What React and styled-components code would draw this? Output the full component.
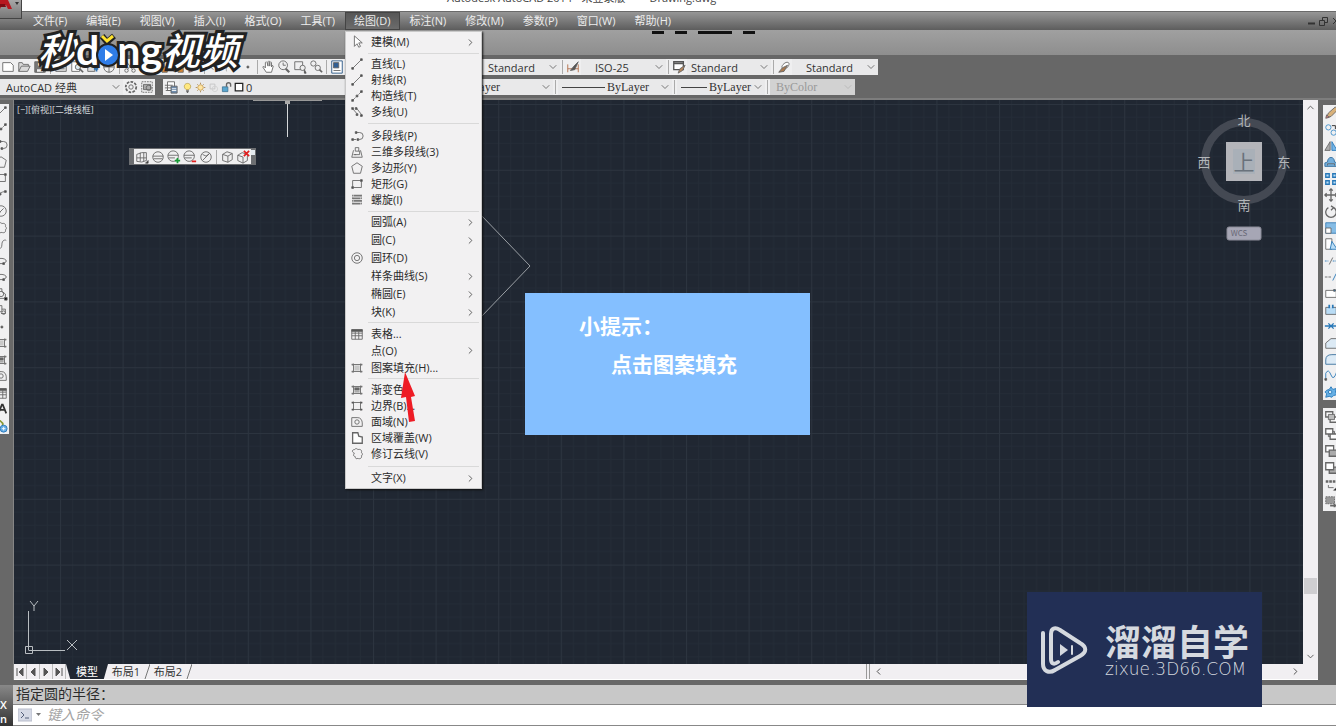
import { Fragment } from "react";
import styled, { createGlobalStyle } from "styled-components";
import { ChevronDown, ChevronLeft, ChevronRight, ChevronUp } from "lucide-react";

const GlobalStyle = createGlobalStyle`
  * { box-sizing: border-box; }
  body {
    margin: 0;
    background: #686868;
    font-family: "Open Sans", "Noto Sans CJK SC", sans-serif;
    font-size: 11px;
    color: #2b2b2b;
  }
  button, input, select { font: inherit; color: inherit; }
`;

/* Small 16x16 drawings used by toolbars and menu rows */
const shapes = {
  arrow: <path d="M5 1v12l3-3 2 4 2-1-2-4h4z" fill="#fff" />,
  line: <><path d="M3 13 13 3" /><path d="M2 12h2v2H2zM12 2h2v2h-2z" fill="#444" /></>,
  xline: <><path d="M2 14 14 2" strokeDasharray="5 1" /><path d="M2 12h2v2H2zM7 7h2v2H7zM12 2h2v2h-2z" fill="#444" /></>,
  mline: <><path d="m2 3 6 7M7 3l7 9" /><path d="M2 3h2v2H2zM6 3h2v2H6zM7 10h2v2H7zM12 11h2v2h-2z" fill="#444" /></>,
  pline: <><path d="M3 12h4M7 4h4a4 4 0 0 1 0 8h-1" /><path d="M2 11h2v2H2zM8 11h2v2H8zM6 3h2v2H6z" fill="#444" /></>,
  poly3d: <><path d="m4 6-2 8h12l-2-8" /><path d="M5 11h6V7H6V3h4v4M4 11h3" /></>,
  polygon: <path d="M8 2 14 6 12 14H4L2 6z" />,
  rect: <><path d="M3 4h10v8H3z" /><path d="M12 3h2v2h-2zM2 11h2v2H2z" fill="#444" /></>,
  helix: <><path d="M4 3h9M3 6h9M4 9h9M3 12h9" stroke="#777" strokeWidth="2" /><path d="M3 2v12M13 2v12" strokeDasharray="2 1" /></>,
  donut: <><circle cx="8" cy="8" r="6" /><circle cx="8" cy="8" r="3" /></>,
  table: <><path d="M2 3h12v11H2zM2 7h12M2 10h12M6 5v9M10 5v9" /><path d="M2 3h12v2H2z" fill="#555" /></>,
  hatch: <><path d="M4 3v10M12 3v10M2 4h12M2 12h12" /><path d="M5 5h6v6H5z" fill="#c8c8c8" stroke="none" /><path d="M2 3h2v2H2zM12 3h2v2h-2zM2 11h2v2H2zM12 11h2v2h-2z" fill="#777" stroke="none" /></>,
  gradient: <><path d="M4 3v10M12 3v10M2 4h12M2 12h12" /><path d="M5 5h6v3H5z" fill="#666" stroke="none" /><path d="M5 8h6v3H5z" fill="#aaa" stroke="none" /><path d="M2 3h2v2H2zM12 3h2v2h-2zM2 11h2v2H2zM12 11h2v2h-2z" fill="#777" stroke="none" /></>,
  boundary: <><path d="M4 3v10M12 3v10M2 4h12M2 12h12" /><path d="M2 3h2v2H2zM12 3h2v2h-2zM2 11h2v2H2zM12 11h2v2h-2z" fill="#555" stroke="none" /></>,
  region: <><path d="M2 3h7c3 0 5 3 5 6v4H2z" /><circle cx="8" cy="8" r="2.5" /></>,
  wipeout: <path d="M3 2h6l1 4 4 1v7H3z" fill="#fff" strokeWidth="1.5" />,
  cloud: <path d="M5 3c2-2 3-1 4 0 3-1 5 1 4 3 2 2 1 4 0 4 1 3-2 4-4 3-2 1-3 0-3-2-3-1-2-2-1-4-3-1-3-4 0-4z" />,
  arc: <><path d="M3 13C4 7 8 4 14 4" /><path d="M2 12h2v2H2zM6 6h2v2H6zM12 3h2v2h-2z" fill="#444" /></>,
  circle: <><circle cx="8" cy="8" r="6" /><path d="m7 9 4-4M6 9h2" /></>,
  spline: <path d="M2 4c0 12 7 11 7 5s4-6 5-5" />,
  ellipse: <><ellipse cx="8" cy="8" rx="6" ry="3" /><path d="M10 10h2v2h-2z" fill="#444" /></>,
  insert: <><path d="M2 2h7v3l4 3v5H3V9h4" /><circle cx="8" cy="8" r="3" /><path d="M12 12h3v3h-3z" fill="#111" /></>,
  block: <><path d="M3 3h6v7H3zM9 7h4v5H8" /><circle cx="11" cy="11" r="2" /></>,
  point: <path d="M8 7h2v2H8z" fill="#444" />,
  text: <path d="m5 13 4-10h1l4 10M7 9h5" stroke="#333" strokeWidth="2" />,
  addsel: <><path d="M4 2h3l3 3v3" stroke="#8a9a35" strokeWidth="2" /><circle cx="11" cy="11" r="4" fill="#68afe5" stroke="#2877b9" /><path d="M11 9v4M9 11h4" stroke="#fff" /></>,
  newFile: <path d="M2 3h9l3 3v7H2z" fill="#fff" />,
  open: <><path d="M2 13V3h4l1 2h6v2M2 13l3-6h10l-3 6z" fill="#d9d9d9" /></>,
  save: <><path d="M2 2h12v12H2z" fill="#777" /><path d="M5 3h6v4H5zM4 10h8v4H4z" fill="#eee" /></>,
  print: <><path d="M4 7V2h8v5M2 7h12v6H2z" fill="#ddd" /><path d="M4 10h8" /></>,
  preview: <><path d="M2 2h9v11H2z" fill="#fff" /><circle cx="9" cy="8" r="3" fill="#dceaf2" /><path d="m11 10 4 4" strokeWidth="2" /></>,
  publish: <><path d="M2 4h8v9H2z" fill="#ddd" /><path d="M9 10h5M12 7v6" stroke="#2e70b0" strokeWidth="2" /></>,
  globe: <><circle cx="8" cy="8" r="6" /><path d="M2 8h12M8 2v12" /></>,
  cut: <><path d="m4 2 7 9M12 2 5 11" /><circle cx="4" cy="12" r="2" /><circle cx="12" cy="12" r="2" /></>,
  paste: <><path d="M3 3h8v10H3z" fill="#eee" /><path d="M8 8h6v6H8z" fill="#d98634" /></>,
  undo: <path d="m6 3-4 4 4 4M2 7h7c4 0 5 3 4 6" />,
  redo: <path d="m10 3 4 4-4 4M14 7H7c-4 0-5 3-4 6" stroke="#999" />,
  hand: <path d="M5 9 3 7 2 8l4 6h6l2-7-1-1-1 2V3l-1-1-1 1v4-5L9 1 8 2v5L7 3 6 2 5 3z" fill="#fff" />,
  zoom: <><circle cx="7" cy="6" r="5" /><path d="M7 3v3h3" /><path d="m10 10 4 4" strokeWidth="2.5" /></>,
  zoomWin: <><path d="M2 2h9v9H2z" /><circle cx="11" cy="9" r="3" fill="#eee" /><path d="M13 11v4h2z" fill="#111" /></>,
  zoomPrev: <><circle cx="5" cy="4" r="3" /><circle cx="10" cy="9" r="3" /><path d="m12 11 3 3" strokeWidth="2" /></>,
  props: <><path d="M2 1h12v14H2z" fill="#fff" stroke="#205080" /><path d="M4 3h6v6H4z" fill="#315f94" /><path d="M4 12h8" /></>,
  dimStyle: <><path d="M2 5v9M14 5v9M2 10h12" stroke="#b06b46" /><path d="m5 12 5-1 4-9-5 5z" fill="#555" /></>,
  tableStyle: <><path d="M2 2h11v9H2zM2 4h11" fill="#fff" stroke="#555" strokeWidth="1.5" /><path d="m7 15 5-3 3-6-6 4z" fill="#b8875b" /></>,
  leaderStyle: <><path d="M6 9c-2-2 4-8 7-6 2 1 0 5-3 7" fill="#fff" /><path d="m2 14 6-1 4-7-6 3z" fill="#a8794f" /></>,
  gear: <><circle cx="8" cy="8" r="6" strokeWidth="2" strokeDasharray="3 1.5" /><circle cx="8" cy="8" r="2.5" /></>,
  workspace: <><path d="M2 2h12v12H2z" strokeDasharray="2 1" /><path d="M4 5h8v6H4z" fill="#aaa" /><circle cx="10" cy="9" r="3" /></>,
  layers: <><path d="M4 2h8v10H4z" fill="#fff" /><path d="M1 6h9M1 9h9M2 12h6" /><path d="M8 7h7v8H8z" fill="#6e8cad" /><path d="M9 10h5M9 12h5" stroke="#fff" /></>,
  bulb: <><path d="M6 11C1 7 4 2 8 2s7 5 2 9z" fill="#ffe880" stroke="#b29638" /><path d="M6 13h4M7 15h2" strokeWidth="2" /></>,
  sun: <><circle cx="8" cy="8" r="4" fill="#ffe5a3" stroke="#b98b37" /><path d="M8 1v2M8 13v2M1 8h2M13 8h2M3 3l1 1M12 12l1 1M3 13l1-1M12 4l1-1" stroke="#9b6d28" /></>,
  freeze: <><path d="M3 3h7v7H3z" stroke="#bbb" /><circle cx="10" cy="10" r="4" stroke="#ccc" /></>,
  lock: <><path d="M2 7h8v7H2z" fill="#59a6cf" stroke="#316889" /><path d="M8 7V4c0-4 6-4 6 0v3" strokeWidth="2" /></>,
  swatch: <path d="M2 2h12v12H2z" fill="#fff" stroke="#222" strokeWidth="2" />,
  pencil: <><path d="m3 13 2-5 8-7 3 3-8 8z" fill="#d8b17a" /><path d="m2 14 4-1-3-3z" fill="#d27878" /></>,
  copy: <><circle cx="5" cy="5" r="3" stroke="#3d8dc9" /><circle cx="11" cy="11" r="3" stroke="#3d8dc9" /><path d="M9 3h4v4" stroke="#222" /></>,
  mirror: <><path d="M7 3v10H1z" fill="#aaa" /><path d="M9 3v10h6z" fill="#77b7e8" stroke="#2878b8" /></>,
  offset: <><path d="M1 13V9l3-1c0-7 8-7 8 0l3 1v4z" fill="#73aedb" stroke="#356f9e" /><path d="M4 12v-2h8v2" /></>,
  array: <path d="M2 2h4v4H2zM10 2h4v4h-4zM2 10h4v4H2zM10 10h4v4h-4z" fill="#b9dcf5" stroke="#2878b8" strokeWidth="1.5" />,
  move: <path d="M8 1v14M1 8h14M6 3l2-2 2 2M6 13l2 2 2-2M3 6 1 8l2 2M13 6l2 2-2 2" strokeWidth="1.5" />,
  rotate: <path d="M11 3a6 6 0 1 1-6 0M8 1l3 2-3 3" strokeWidth="1.5" />,
  scale: <><path d="M2 2h13v12H2z" fill="#85bce5" stroke="#397eb5" /><path d="M2 8h6v6H2z" fill="#fff" /></>,
  stretch: <><path d="M2 2h7v12H2z" fill="#fff" /><path d="m9 5-2 9h8z" fill="#b9dcf5" stroke="#2878b8" /></>,
  trim: <><path d="M1 8h4M10 8h5" stroke="#2878b8" strokeDasharray="2 1" /><path d="m6 12 4-8" /></>,
  extend: <><path d="M1 8h8" strokeDasharray="3 1" /><path d="m10 12 4-8" stroke="#2878b8" /></>,
  breakAt: <><path d="M2 5h12v8H2z" fill="#fff" /><path d="M11 4h2v2h-2z" fill="#2878b8" /></>,
  breaks: <><path d="M6 5H2v8h12V5h-4" fill="#b9dcf5" /><path d="M6 2v4M10 2v4" stroke="#2878b8" strokeWidth="2" /></>,
  join: <path d="M1 8h14M5 5l3 3-3 3M11 5 8 8l3 3" stroke="#2878b8" strokeWidth="1.5" />,
  chamfer: <path d="M2 14V8l6-5h7v11z" fill="#dceaf5" />,
  fillet: <path d="M2 14V9q0-6 7-6h6v11z" fill="#dceaf5" stroke="#376f9b" />,
  blend: <><path d="M2 13V6q3-6 6 2t7-5" stroke="#2878b8" /><path d="M1 12h2v2H1z" fill="#444" /></>,
  explode: <><path d="m3 6 3-1 2-3 2 3 4-1-1 4 2 3-4 1-2 2-3-1-4 1 1-4-2-2z" fill="#65afe4" stroke="#2878b8" /><circle cx="7" cy="8" r="2" fill="#d7ecf9" stroke="#2878b8" /></>,
  order: <><path d="M2 2h8v6H2zM7 8h8v6H7z" fill="#fff" strokeWidth="1.5" /><path d="M5 5h7v6H5z" fill="#bbb" /></>,
  orderBack: <><path d="M5 5h7v6H5z" fill="#bbb" /><path d="M2 2h8v6H2zM7 8h8v6H7z" fill="#fff" strokeWidth="1.5" /></>,
  orderAbove: <><path d="M2 2h9v7H2z" fill="#fff" strokeWidth="1.5" /><path d="M6 7h9v7H6z" fill="#aaa" strokeWidth="1.5" /></>,
  orderUnder: <><path d="M6 7h9v7H6z" fill="#aaa" strokeWidth="1.5" /><path d="M2 2h9v8H2z" fill="#fff" strokeWidth="1.5" /></>,
  annot: <><path d="M2 4h3M6 4h3M10 4h3" strokeWidth="3" /><path d="M5 8v3h6" /><path d="m11 14 4-4v4z" fill="#111" /></>,
  hatchBack: <><path d="M2 2h10v8H2z" fill="#999" strokeDasharray="2 1" /><path d="M7 12h7M12 10v4" strokeWidth="2" /></>,
  mesh: <><path d="M2 5q6-3 11-2v9q-5 3-11 1zM2 9h11M6 3v10M10 3v10" /><path d="m12 15 3-3v3z" fill="#111" /></>,
  sphere: <><circle cx="8" cy="8" r="6" /><path d="M2 7h12M3 10h10" /></>,
  spherePlus: <><circle cx="7" cy="7" r="6" /><path d="M1 6h12M2 9h7" /><path d="M9 12h6M12 9v6" stroke="#169b35" strokeWidth="2" /></>,
  sphereMinus: <><circle cx="7" cy="7" r="6" /><path d="M1 6h12M2 9h8" /><path d="M10 13h5" stroke="#e02020" strokeWidth="2" /></>,
  sphereSlash: <><circle cx="8" cy="8" r="6" /><path d="m4 12 8-8M4 5l4 2 4-3" /></>,
  cube: <path d="m3 5 5-3 6 2v7l-5 3-6-2zM3 5l6 2 5-3M9 7v7" fill="#eee" />,
  cubeX: <><path d="m2 6 5-3 6 2v7l-5 3-6-3zM2 6l6 2v7" /><path d="m9 1 6 6M15 1 9 7" stroke="#e02020" strokeWidth="2" /></>,
};

const Glyph = ({ name, size = 14 }) => (
  <svg width={size} height={size} viewBox="0 0 16 16" fill="none" stroke="#666" strokeWidth="1" aria-hidden="true">
    {shapes[name]}
  </svg>
);

const App = styled.div`
  position: relative;
  display: flex;
  flex-direction: column;
  min-height: 100vh;
  overflow: hidden;
`;

const TitleBar = styled.header`
  display: flex;
  align-items: flex-end;
  gap: 24px;
  height: 11px;
  padding: 0 0 5px 447px;
  background: #fff;
  line-height: 16px;
  color: #444;
  white-space: nowrap;
  overflow: hidden;
`;

const AppButton = styled.button`
  position: absolute;
  z-index: 5;
  left: 0;
  top: 0;
  width: 22px;
  height: 19px;
  padding: 0;
  border: 0;
  border-right: 1px solid #444;
  border-bottom: 1px solid #444;
  background: linear-gradient(#a7a7a7, #777);
  line-height: 0;
`;

const MenuBar = styled.nav`
  position: relative;
  z-index: 4;
  display: flex;
  height: 19px;
  padding-left: 24px;
  border-top: 1px solid #6a6a6a;
  background: linear-gradient(#969696, #5d5d5d);
`;

const MenuItem = styled.div`
  position: relative;
`;

const MenuButton = styled.button`
  height: 18px;
  padding: 0 10px 0 9px;
  border: 0;
  background: ${({ $open }) => ($open ? "linear-gradient(#555, #6d6d6d)" : "none")};
  box-shadow: ${({ $open }) => ($open ? "inset 0 0 0 1px #444" : "none")};
  color: #ededed;
  line-height: 18px;
  white-space: nowrap;
`;

const WindowControls = styled.div`
  display: flex;
  align-items: center;
  margin-left: auto;
`;

const Menu = styled.div`
  position: absolute;
  left: 0;
  top: 19px;
  width: 137px;
  border: 1px solid #c9c9c9;
  background: #f2f1f2;
  box-shadow: 1px 1px 2px #111;
`;

const MenuGroup = styled.div`
  padding: ${({ $pad }) => $pad};
`;

const MenuRow = styled.button`
  display: grid;
  grid-template-columns: 20px 1fr 12px;
  align-items: center;
  column-gap: 1px;
  width: 100%;
  height: ${({ $height }) => $height}px;
  padding: 0 4px;
  border: 0;
  background: none;
  text-align: left;
  line-height: 16px;
  white-space: nowrap;

  span { display: flex; }
`;

const Separator = styled.hr`
  height: 1px;
  margin: 0 2px 0 22px;
  border: 0;
  background: #d9d9d9;
`;

const RedArrow = styled.svg`
  position: absolute;
  left: 54px;
  top: 339px;
`;

const Band = styled.div`
  height: 25px;
  padding-left: 652px;
  background: linear-gradient(#a0a0a0, #8e8e8e);
  line-height: 0;
`;

const Toolbars = styled.div`
  display: flex;
  flex-direction: column;
  gap: 4px;
  padding: 4px 0 3px;
  background: #676767;
`;

const ToolRow = styled.div`
  display: flex;
  height: 16px;
`;

const Strip = styled.div`
  display: flex;
  align-items: center;
  width: ${({ $width }) => ($width ? `${$width}px` : "auto")};
  margin-right: ${({ $after }) => $after || 0}px;
  background: #efeff0;
  overflow: hidden;
`;

const ToolButton = styled.button`
  display: flex;
  flex: none;
  align-items: center;
  justify-content: center;
  width: ${({ $width }) => $width || 16}px;
  height: 16px;
  padding: 0;
  border: 0;
  background: none;
`;

const Divider = styled.span`
  flex: none;
  width: 1px;
  height: 14px;
  margin: 0 2px;
  background: #aaa;
`;

const Picker = styled.label`
  position: relative;
  display: flex;
  flex: none;
  align-items: center;
  width: ${({ $width }) => $width}px;
  height: 16px;
  padding-left: ${({ $indent }) => $indent}px;
  gap: 2px;
  background: ${({ $off }) => ($off ? "#d2d2d2" : "#e9e9ea")};
  color: ${({ $off }) => ($off ? "#999" : "#333")};

  select {
    flex: 1;
    min-width: 0;
    height: 16px;
    padding: 0;
    border: 0;
    outline: 0;
    appearance: none;
    background: none;
    opacity: 1;
    font-family: ${({ $serif }) => ($serif ? '"Liberation Serif", serif' : "inherit")};
    font-size: ${({ $serif }) => ($serif ? 12 : 11)}px;
  }

  svg:last-child {
    position: absolute;
    right: 1px;
    pointer-events: none;
  }
`;

const LineSample = styled.span`
  flex: none;
  width: ${({ $width }) => $width}px;
  height: 1px;
  background: #444;
`;

const Workspace = styled.main`
  display: flex;
  flex: 1;
  align-items: stretch;
  border-top: 2px solid #7d7d7d;
  background: #686868;
`;

const LeftTools = styled.aside`
  flex: none;
  width: 14px;
  padding: 4px 4px 0 0;
  border-right: 1px solid #858585;
`;

const ToolColumn = styled.div`
  display: grid;
  grid-auto-rows: 1fr;
  justify-content: ${({ $end }) => ($end ? "start" : "end")};
  align-items: center;
  height: ${({ $height }) => $height}px;
  margin-bottom: 8px;
  background: #f0f0f1;
  overflow: hidden;
`;

const RightTools = styled.aside`
  flex: none;
  width: 18px;
  padding: 5px 0 0 5px;
`;

const Viewport = styled.section`
  display: flex;
  flex: 1;
  flex-direction: column;
  min-width: 0;
`;

const CanvasRow = styled.div`
  display: flex;
  flex: 1;
`;

const Canvas = styled.div`
  position: relative;
  flex: 1;
  min-width: 0;
  background: #202732;
  overflow: hidden;
`;

const Drawing = styled.svg`
  position: absolute;
  inset: 0;
  width: 100%;
  height: 100%;
`;

const ViewLabel = styled.div`
  position: absolute;
  left: 3px;
  top: 2px;
  color: #d4d7da;
  font-size: 9px;
  line-height: 16px;
`;

const MeshBar = styled.div`
  position: absolute;
  left: 115px;
  top: 48px;
  display: flex;
  align-items: center;
  height: 17px;
  padding: 1px 5px;
  background: #6c6e71;

  > div { height: 15px; }
`;

const CloseDot = styled.button`
  position: absolute;
  right: 1px;
  top: 2px;
  width: 4px;
  height: 5px;
  padding: 0;
  border: 0;
  background: #e3e9ee;
`;

const ViewCube = styled.svg`
  position: absolute;
  right: 10px;
  top: 9px;
  font-family: "Noto Sans CJK SC", sans-serif;
`;

const AxisMark = styled.svg`
  position: absolute;
  left: 8px;
  bottom: 2px;
`;

const Tip = styled.div`
  position: absolute;
  left: 511px;
  top: 193px;
  width: 285px;
  height: 142px;
  padding: 13px 0 0 54px;
  background: #84bfff;
  color: #fff;
  font-family: "Noto Sans CJK SC", sans-serif;
  font-size: 21px;
  font-weight: 700;
  line-height: 38px;

  p { margin: 0; }
  p + p { padding-left: 32px; }
`;

const VScroll = styled.div`
  display: flex;
  flex-direction: column;
  align-items: center;
  justify-content: space-between;
  width: 15px;
  padding: 2px 0;
  background: #f1eff2;
`;

const Thumb = styled.div`
  width: 13px;
  height: 16px;
  margin: auto 0 57px;
  background: #cfced1;
`;

const TabBar = styled.div`
  display: flex;
  align-items: center;
  height: 16px;
  border-bottom: 1px solid #fff;
  background: #f1eff2;
`;

const TabNav = styled.button`
  display: flex;
  align-items: center;
  justify-content: center;
  width: 13px;
  height: 15px;
  padding: 0;
  border: 0;
  border-right: 1px solid #bbb;
  background: none;
`;

const Tab = styled.button`
  height: 15px;
  width: ${({ $active }) => ($active ? 42 : 36)}px;
  padding: 0;
  border: 0;
  background: ${({ $active }) => ($active ? "#202732" : "none")};
  clip-path: ${({ $active }) => ($active ? "polygon(0 0, 100% 0, 90% 100%, 10% 100%)" : "none")};
  color: ${({ $active }) => ($active ? "#fff" : "#333")};
  line-height: 15px;
  white-space: nowrap;
`;

const Slash = styled.svg`
  flex: none;
`;

const HScroll = styled.div`
  display: flex;
  align-items: center;
  justify-content: space-between;
  width: 452px;
  height: 15px;
  margin-left: auto;
  padding: 0 17px 0 3px;
  border-left: 4px double #999;
`;

const CommandPanel = styled.footer`
  display: grid;
  grid-template-columns: 13px 1fr;
  margin-top: 5px;
`;

const Grip = styled.div`
  display: flex;
  flex-direction: column;
  align-items: flex-start;
  height: 41px;
  padding-top: 13px;
  background: linear-gradient(#888, #333);
  color: #fff;
  font-size: 11px;
  font-weight: 600;
  line-height: 14px;
  overflow: hidden;
`;

const GripClose = styled.button`
  padding: 0;
  border: 0;
  background: none;
  line-height: 14px;
`;

const History = styled.div`
  height: 20px;
  padding-left: 3px;
  border-bottom: 1px solid #888;
  background: #c8c8c8;
  font-family: "Noto Sans CJK SC", sans-serif;
  font-size: 14px;
  line-height: 16px;
`;

const Prompt = styled.label`
  display: flex;
  align-items: center;
  gap: 4px;
  height: 21px;
  padding-left: 5px;
  border-bottom: 1px solid #888;
  background: #fff;

  input {
    flex: 1;
    margin-left: 2px;
    padding: 0;
    border: 0;
    outline: 0;
    font-size: 14px;
    font-style: italic;
    line-height: 18px;
  }
  input::placeholder { color: #a4a4a4; }
`;

const VideoMark = styled.div`
  position: absolute;
  z-index: 6;
  left: 38px;
  top: 25px;
  display: flex;
  align-items: center;
  color: #fff;
  font-family: Lato, "Noto Sans CJK SC", sans-serif;
  font-size: 41px;
  font-weight: 700;
  line-height: 50px;
  -webkit-text-stroke: 6px #222;
  paint-order: stroke fill;

  em { font-size: 38px; font-weight: 500; }
  svg { flex: none; margin: 0 -3px; z-index: 1; }
`;

const SiteMark = styled.div`
  position: absolute;
  z-index: 6;
  right: 74px;
  bottom: 19px;
  display: flex;
  align-items: center;
  gap: 17px;
  width: 235px;
  height: 115px;
  padding-left: 13px;
  background: #222f55;
  color: #d5d9df;
`;

const SiteName = styled.div`
  font-family: "Noto Sans CJK SC", sans-serif;
  font-size: 36px;
  font-weight: 700;
  line-height: 38px;
  white-space: nowrap;
`;

const SiteUrl = styled.div`
  font-family: "DejaVu Sans", sans-serif;
  font-size: 17px;
  font-weight: 200;
  line-height: 20px;
`;

const menuNames = ["文件(F)", "编辑(E)", "视图(V)", "插入(I)", "格式(O)", "工具(T)", "绘图(D)", "标注(N)", "修改(M)", "参数(P)", "窗口(W)", "帮助(H)"];

const drawMenu = [
  { height: 20, pad: "0 0 1px", rows: [["arrow", "建模(M)", true]] },
  { height: 16, pad: "2px 0 3px", rows: [["line", "直线(L)"], ["line", "射线(R)"], ["xline", "构造线(T)"], ["mline", "多线(U)"]] },
  { height: 16, pad: "4px 0 3px", rows: [["pline", "多段线(P)"], ["poly3d", "三维多段线(3)"], ["polygon", "多边形(Y)"], ["rect", "矩形(G)"], ["helix", "螺旋(I)"]] },
  { height: 18, pad: "1px 0", rows: [["", "圆弧(A)", true], ["", "圆(C)", true], ["donut", "圆环(D)"], ["", "样条曲线(S)", true], ["", "椭圆(E)", true], ["", "块(K)", true]] },
  { height: 17, pad: "2px 0", rows: [["table", "表格..."], ["", "点(O)", true], ["hatch", "图案填充(H)..."]] },
  { height: 16, pad: "3px 0 4px", rows: [["gradient", "渐变色..."], ["boundary", "边界(B)..."], ["region", "面域(N)"], ["wipeout", "区域覆盖(W)"], ["cloud", "修订云线(V)"]] },
  { height: 20, pad: "1px 0 0", rows: [["", "文字(X)", true]] },
];

const drawTools = ["line", "xline", "pline", "polygon", "rect", "arc", "circle", "cloud", "spline", "ellipse", "ellipse", "insert", "block", "point", "hatch", "gradient", "region", "table", "text", "addsel"];
const modifyTools = ["pencil", "copy", "mirror", "offset", "array", "move", "rotate", "scale", "stretch", "trim", "extend", "breakAt", "breaks", "join", "chamfer", "fillet", "blend", "explode"];
const orderTools = ["order", "orderBack", "orderAbove", "orderUnder", "annot", "hatchBack"];

const Tools = ({ names, width }) =>
  names.map((name, i) =>
    name === "|" ? <Divider key={i} /> : (
      <ToolButton key={i} $width={width} aria-label={name}><Glyph name={name} /></ToolButton>
    )
  );

const Dropdown = ({ label, value, width, indent = 6, serif, off, sample, icons }) => (
  <Picker $width={width} $indent={indent} $serif={serif} $off={off}>
    {icons && icons.map((name) => <Glyph key={name} name={name} size={name === "swatch" ? 10 : 11} />)}
    {sample && <LineSample $width={sample} />}
    <select aria-label={label} disabled={off} defaultValue={value}>
      <option>{value}</option>
    </select>
    <ChevronDown size={12} strokeWidth={2} color={off ? "#bbb" : "#777"} />
  </Picker>
);

const DrawMenu = () => (
  <Menu>
    {drawMenu.map((group, i) => (
      <Fragment key={i}>
        {i > 0 && <Separator />}
        <MenuGroup $pad={group.pad}>
          {group.rows.map(([icon, label, more]) => (
            <MenuRow key={label} $height={group.height}>
              <span>{icon && <Glyph name={icon} />}</span>
              <span>{label}</span>
              {more && <ChevronRight size={11} color="#555" />}
            </MenuRow>
          ))}
        </MenuGroup>
      </Fragment>
    ))}
    <RedArrow width="16" height="52" viewBox="0 0 16 52">
      <path d="M5 1 1 27l5-1 3 25 6-1-4-24 4-1z" fill="#ee1c25" />
    </RedArrow>
  </Menu>
);

const Page = () => (
  <App>
    <GlobalStyle />
    <TitleBar>
      <span>Autodesk AutoCAD 2014 - 未登录版</span>
      <span>Drawing.dwg</span>
    </TitleBar>
    <AppButton aria-label="Application menu">
      <svg width="21" height="18" viewBox="0 0 21 18">
        <path d="M0 0h8l4 9H8L6 5H2L0 9z" fill="#b81820" />
        <path d="M0 4h5l1 3H0z" fill="#7c0c13" />
        <path d="M15 2h4l-2 3z" fill="#333" />
      </svg>
    </AppButton>
    <MenuBar>
      {menuNames.map((name) => (
        <MenuItem key={name}>
          <MenuButton $open={name === "绘图(D)"}>{name}</MenuButton>
          {name === "绘图(D)" && <DrawMenu />}
        </MenuItem>
      ))}
      <WindowControls>
        <svg width="30" height="14" viewBox="0 0 30 14" fill="none" stroke="#333">
          <path d="M2 9.500h7" strokeWidth="2" />
          <path d="M13.500 6.500h5v5h-5zM16.500 6V3.500h5v5H19M27 4l6 6M33 4l-6 6" />
        </svg>
      </WindowControls>
    </MenuBar>
    <Band>
      <svg width="104" height="3" viewBox="0 0 104 3">
        <path d="M0 0h12v3H0zM23 0h12v3H23zM46 0h34v3H46zM91 0h12v3H91z" fill="#111" />
      </svg>
    </Band>
    <Toolbars>
      <ToolRow>
        <Strip $width={482}>
          <Tools names={["newFile", "open", "save", "|", "print", "preview", "publish", "globe", "|", "cut", "copy", "paste", "paste", "pencil", "|", "undo", "redo", "point", "|", "hand", "zoom", "zoomWin", "zoomPrev", "|", "props", "table", "insert", "order"]} />
        </Strip>
        <Strip>
          <Dropdown label="文字样式" value="Standard" width={78} />
          <Divider />
          <Tools names={["dimStyle"]} />
          <Dropdown label="标注样式" value="ISO-25" width={85} indent={14} />
          <Divider />
          <Tools names={["tableStyle"]} />
          <Dropdown label="表格样式" value="Standard" width={84} indent={4} />
          <Divider />
          <Tools names={["leaderStyle"]} />
          <Dropdown label="多重引线样式" value="Standard" width={86} indent={14} />
        </Strip>
      </ToolRow>
      <ToolRow>
        <Strip $after={8}>
          <Dropdown label="工作空间" value="AutoCAD 经典" width={123} />
          <Tools names={["gear", "workspace"]} />
        </Strip>
        <Strip>
          <Tools names={["layers"]} />
          <Dropdown label="图层" value="0" width={217} indent={3} icons={["bulb", "sun", "freeze", "lock", "swatch"]} />
          <Tools names={["layers", "layers"]} />
          <Divider />
          <Dropdown label="颜色" value="ByLayer" width={120} indent={25} serif />
          <Divider />
          <Dropdown label="线型" value="ByLayer" width={114} indent={4} serif sample={43} />
          <Divider />
          <Dropdown label="线宽" value="ByLayer" width={88} indent={4} serif sample={26} />
          <Divider />
          <Dropdown label="打印样式" value="ByColor" width={85} indent={6} serif off />
        </Strip>
      </ToolRow>
    </Toolbars>
    <Workspace>
      <LeftTools>
        <ToolColumn $height={330}><Tools names={drawTools} /></ToolColumn>
      </LeftTools>
      <Viewport>
        <CanvasRow>
          <Canvas>
            <Drawing>
              <defs>
                <pattern id="grid" x="46" y="4" width="62.6" height="65.8" patternUnits="userSpaceOnUse">
                  <path d="M12.5 0v66M25 0v66M37.6 0v66M50.1 0v66M0 13.2h63M0 26.3h63M0 39.5h63M0 52.6h63" stroke="#242c37" />
                  <path d="M.5 0v66M0 .5h63" stroke="#2c343f" />
                </pattern>
              </defs>
              <rect width="100%" height="100%" fill="url(#grid)" />
              <path d="m466 114 50 52-50 52" fill="none" stroke="#9a9fa4" />
              <path d="M239 .5h69" stroke="#999" />
              <path d="M273.500 2v35" stroke="#d5d8da" />
              <path d="M271 1h5v3h-5z" fill="#aaa" />
            </Drawing>
            <ViewLabel>[−][俯视][二维线框]</ViewLabel>
            <MeshBar>
              <Strip>
                <Tools names={["mesh", "sphere", "spherePlus", "sphereMinus", "sphereSlash", "|", "cube", "cubeX"]} />
              </Strip>
              <CloseDot aria-label="Close" />
            </MeshBar>
            <ViewCube width="100" height="134" viewBox="0 0 100 134" textAnchor="middle">
              <circle cx="51" cy="52" r="39" fill="none" stroke="#444953" strokeWidth="8" />
              <g fill="#b3b6ba" fontSize="13">
                <text x="51" y="16">北</text>
                <text x="51" y="101">南</text>
                <text x="11" y="58">西</text>
                <text x="91" y="58">东</text>
              </g>
              <path d="M33 33h36v39H33z" fill="#b4b5ba" />
              <path d="M40 40h22v25H40z" fill="#a9b0b8" />
              <text x="51" y="61" fontSize="21" fill="#69727c">上</text>
              <rect x="34" y="118" width="34" height="13" rx="2" fill="#a6a6b5" stroke="#8b8c98" />
              <text x="46" y="127" fontSize="8" fill="#686876">WCS</text>
            </ViewCube>
            <AxisMark width="60" height="62" viewBox="0 0 60 62" fill="none" stroke="#b8bdc1">
              <path d="M6.500 11v39M10 50.500h33M3.500 46.500h7v7h-7zM6.500 50.500h4" />
              <path d="m8 1 4 5 4-5M12 6v5M45 40l10 10M55 40 45 50" />
            </AxisMark>
            <Tip>
              <p>小提示：</p>
              <p>点击图案填充</p>
            </Tip>
          </Canvas>
          <VScroll>
            <ChevronUp size={11} color="#555" />
            <Thumb />
            <ChevronDown size={11} color="#555" />
          </VScroll>
        </CanvasRow>
        <TabBar>
          {["M3 2v8M9 2 5 6l4 4z", "M8 2 4 6l4 4z", "m4 2 4 4-4 4z", "M9 2v8M3 2l4 4-4 4z"].map((d) => (
            <TabNav key={d} aria-label="Layout tabs">
              <svg width="12" height="12" viewBox="0 0 12 12" fill="#555" stroke="#555"><path d={d} /></svg>
            </TabNav>
          ))}
          <Tab $active>模型</Tab>
          <Tab>布局1</Tab>
          <Slash width="6" height="15"><path d="M6 0 1 15" stroke="#777" /></Slash>
          <Tab>布局2</Tab>
          <Slash width="6" height="15"><path d="M6 0 1 15" stroke="#777" /></Slash>
          <HScroll>
            <ChevronLeft size={11} color="#444" />
            <ChevronRight size={11} color="#444" />
          </HScroll>
        </TabBar>
      </Viewport>
      <RightTools>
        <ToolColumn $end $height={295}><Tools names={modifyTools} /></ToolColumn>
        <ToolColumn $end $height={103}><Tools names={orderTools} /></ToolColumn>
      </RightTools>
    </Workspace>
    <CommandPanel>
      <Grip>
        <GripClose>X</GripClose>
        <span>n</span>
      </Grip>
      <div>
        <History>指定圆的半径：</History>
        <Prompt>
          <svg width="14" height="14" viewBox="0 0 14 14" fill="none" stroke="#55607a">
            <path d="M0 1h14v12H0z" fill="#d5d9e5" stroke="#b9bdcb" />
            <path d="m3 4 3 3-3 3M7 10h4" />
          </svg>
          <svg width="5" height="4"><path d="M0 0h5L2.500 3z" fill="#777" /></svg>
          <input placeholder="键入命令" aria-label="命令" />
        </Prompt>
      </div>
    </CommandPanel>
    <VideoMark>
      <em>秒</em>
      <span>d</span>
      <svg width="24" height="34" viewBox="0 0 24 34">
        <path d="m6 3 5 6 7-6" fill="none" stroke="#222" strokeWidth="6" />
        <circle cx="12" cy="22" r="12" fill="#222" />
        <circle cx="12" cy="22" r="10" fill="#2f7de8" />
        <path d="m9 16 8 6-8 6z" fill="#fff" />
        <path d="m6 3 5 5 6-5" fill="none" stroke="#ffe32e" strokeWidth="3" />
      </svg>
      <span>ng</span>
      <em>视频</em>
    </VideoMark>
    <SiteMark>
      <svg width="48" height="50" viewBox="0 0 48 50" fill="none" stroke="#d5d9df" strokeWidth="4" strokeLinecap="round">
        <path d="M3 8v31c0 7 6 10 12 6l25-14c7-4 7-9 0-13L20 5c-5-3-9-2-9 4v25c0 5 3 6 7 3" />
        <path d="m20 19 8 6-8 6z" fill="#d5d9df" stroke="none" />
        <path d="M32 21v8" strokeWidth="2" />
      </svg>
      <div>
        <SiteName>溜溜自学</SiteName>
        <SiteUrl>zixue.3D66.COM</SiteUrl>
      </div>
    </SiteMark>
  </App>
);

export default Page;
